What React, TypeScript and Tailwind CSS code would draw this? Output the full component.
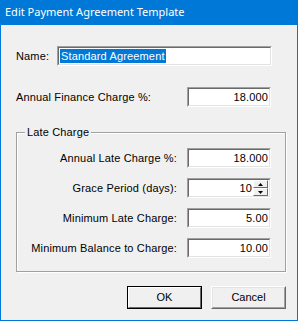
import React from "react";

const font = { fontFamily: '"Liberation Sans", Arial, sans-serif' };

function Field({ value, w, children }: { value?: string; w: string; children?: React.ReactNode }) {
  return (
    <div className={`${w} h-[20px] border border-t-[#a0a0a0] border-l-[#a0a0a0] border-b-white border-r-white`}>
      <div className="h-full border border-t-[#696969] border-l-[#696969] border-b-[#e3e3e3] border-r-[#e3e3e3] bg-white flex items-center justify-end pr-[1px] text-[11px] text-black leading-none tracking-[0.15px]">
        {children ?? value}
      </div>
    </div>
  );
}

function SpinBtn({ up }: { up: boolean }) {
  return (
    <div className="w-[15px] h-[8px] bg-[#f0f0f0] border border-t-white border-l-white border-b-[#696969] border-r-[#696969] flex items-center justify-center">
      <svg width="5" height="3" viewBox="0 0 5 3">
        {up ? <polygon points="2.5,0 5,3 0,3" fill="#000" /> : <polygon points="0,0 5,0 2.5,3" fill="#000" />}
      </svg>
    </div>
  );
}

function Row({ label, value, spin }: { label: string; value: string; spin?: boolean }) {
  return (
    <div className="flex items-center h-[20px]">
      <div className="w-[160px] text-right text-[11px] text-black tracking-[0.15px]">{label}</div>
      <div className="ml-[10px]">
        {spin ? (
          <Field w="w-[84px]">
            <span className="mr-[1px]">{value}</span>
            <div className="flex flex-col">
              <SpinBtn up />
              <SpinBtn up={false} />
            </div>
          </Field>
        ) : (
          <Field w="w-[84px]" value={value} />
        )}
      </div>
    </div>
  );
}

export default function App() {
  return (
    <div className="w-[299px] h-[322px] bg-white" style={font}>
      <div className="w-[298px] h-[321px] flex flex-col border-l border-r border-b border-[#0078d7]">
        <div className="h-[25px] bg-[#0078d7] flex items-center pl-[4px] text-white text-[11px]" style={{ fontFamily: '"Noto Sans", "Open Sans", sans-serif' }}>
          Edit Payment Agreement Template
        </div>
        <div className="flex-1 bg-[#f0f0f0] flex flex-col">
          <div className="flex items-center mt-[21px] pl-[15px] h-[20px]">
            <span className="text-[11px] text-black w-[41px] tracking-[0.15px]">Name:</span>
            <Field w="w-[215px]">
              <div className="flex-1 flex items-center pl-[1px]">
                <span className="bg-[#0078d7] text-white px-[1px] h-[14px] flex items-center">Standard Agreement</span>
              </div>
            </Field>
          </div>
          <div className="flex items-center mt-[21px] pl-[15px] h-[20px]">
            <span className="text-[11px] text-black w-[171px] tracking-[0.15px]">Annual Finance Charge %:</span>
            <Field w="w-[84px]" value="18.000" />
          </div>
          <div className="relative ml-[15px] mt-[25px] w-[270px] h-[140px] border border-[#a0a0a0] shadow-[1px_1px_0_#ffffff,inset_1px_1px_0_#ffffff]">
            <span className="absolute left-[8px] -top-[8px] bg-[#f0f0f0] px-[2px] text-[11px] text-black leading-[14px] tracking-[0.15px]">Late Charge</span>
            <div className="flex flex-col gap-[10px] mt-[15px]">
              <Row label="Annual Late Charge %:" value="18.000" />
              <Row label="Grace Period (days):" value="10" spin />
              <Row label="Minimum Late Charge:" value="5.00" />
              <Row label="Minimum Balance to Charge:" value="10.00" />
            </div>
          </div>
          <div className="flex justify-end gap-[9px] mt-[14px] pr-[11px]">
            <div className="w-[75px] h-[23px] border border-black">
              <div className="h-full border border-t-white border-l-white border-b-[#696969] border-r-[#696969] bg-[#f0f0f0] flex items-center justify-center text-[11px] text-black">
                OK
              </div>
            </div>
            <div className="w-[75px] h-[23px] border border-t-white border-l-white border-b-[#696969] border-r-[#696969]">
              <div className="h-full border border-t-[#e3e3e3] border-l-[#e3e3e3] border-b-[#a0a0a0] border-r-[#a0a0a0] bg-[#f0f0f0] flex items-center justify-center text-[11px] text-black">
                Cancel
              </div>
            </div>
          </div>
        </div>
      </div>
    </div>
  );
}
